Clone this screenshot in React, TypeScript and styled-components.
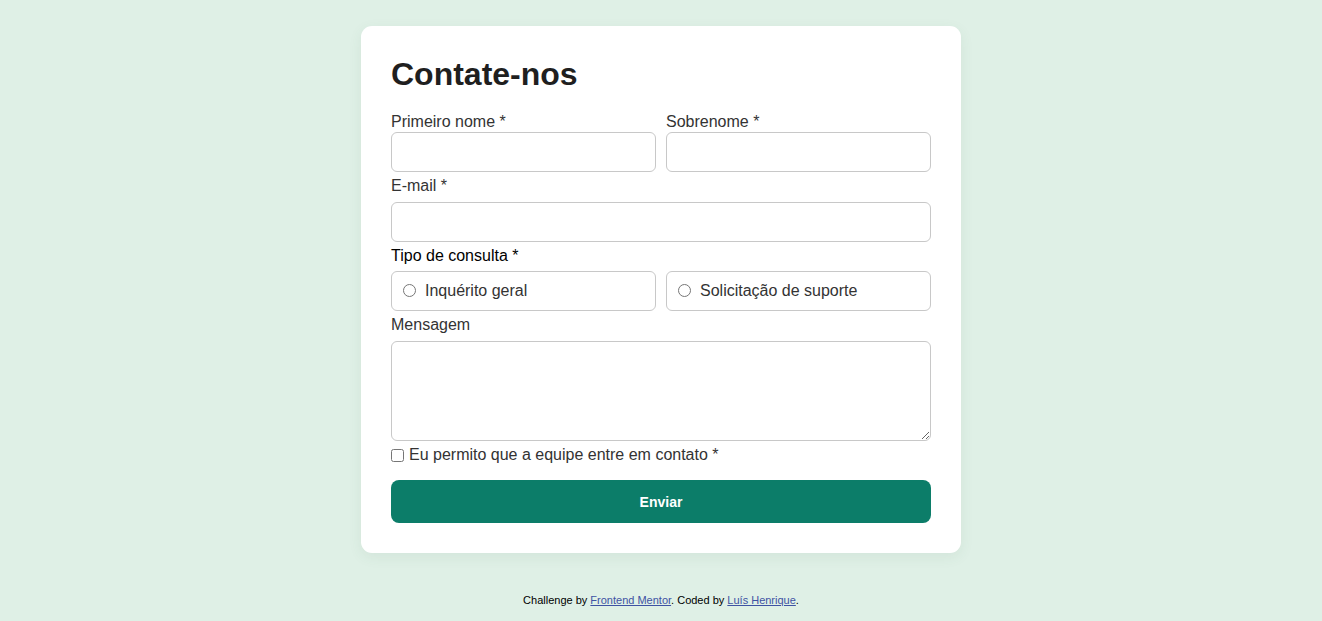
import * as React from 'react'
import styled, { createGlobalStyle } from 'styled-components'

const GlobalStyle = createGlobalStyle`
  body {
    margin: 0;
    background: #dff0e6;
    font-family: 'Liberation Sans', Arial, sans-serif;
  }
`

export default function App() {
  return (
    <React.Fragment>
      <GlobalStyle />
      <Page>
        <Card>
          <Title>Contate-nos</Title>
          <Form onSubmit={e => e.preventDefault()}>
            <Row>
              <Field>
                <Label htmlFor="first" tight>
                  Primeiro nome *
                </Label>
                <Input id="first" type="text" />
              </Field>
              <Field>
                <Label htmlFor="last" tight>
                  Sobrenome *
                </Label>
                <Input id="last" type="text" />
              </Field>
            </Row>
            <Field>
              <Label htmlFor="email">E-mail *</Label>
              <Input id="email" type="email" />
            </Field>
            <Fieldset>
              <Legend>Tipo de consulta *</Legend>
              <Row>
                <RadioBox>
                  <Radio type="radio" name="query" />
                  Inquérito geral
                </RadioBox>
                <RadioBox>
                  <Radio type="radio" name="query" />
                  Solicitação de suporte
                </RadioBox>
              </Row>
            </Fieldset>
            <Field>
              <Label htmlFor="msg">Mensagem</Label>
              <TextArea id="msg" />
            </Field>
            <Consent>
              <Check type="checkbox" />
              Eu permito que a equipe entre em contato *
            </Consent>
            <Submit type="submit">Enviar</Submit>
          </Form>
        </Card>
        <Footer>
          Challenge by <a href="#">Frontend Mentor</a>. Coded by{' '}
          <a href="#">Luís Henrique</a>.
        </Footer>
      </Page>
    </React.Fragment>
  )
}

const Page = styled.main`
  display: flex;
  flex-direction: column;
  align-items: center;
  padding-top: 26px;
`

const Card = styled.section`
  box-sizing: border-box;
  width: 600px;
  padding: 30px;
  background: #fff;
  border-radius: 11px;
  box-shadow: 0 4px 14px rgba(60, 100, 80, 0.08);
`

const Title = styled.h1`
  margin: 0 0 20px;
  font-size: 32px;
  font-weight: 700;
  color: #1f1f1f;
`

const Form = styled.form`
  display: flex;
  flex-direction: column;
`

const Row = styled.div`
  display: grid;
  grid-template-columns: 1fr 1fr;
  gap: 10px;
`

const Field = styled.div`
  display: flex;
  flex-direction: column;
  margin-bottom: 5px;
`

const Label = styled.label<{ tight?: boolean }>`
  font-size: 16px;
  color: #333;
  margin-bottom: ${p => (p.tight ? '0.5px' : '7.5px')};
`

const Input = styled.input`
  box-sizing: border-box;
  height: 40px;
  width: 100%;
  border: 1px solid #c8c8c8;
  border-radius: 6px;
  font: inherit;
  padding: 0 10px;
`

const Fieldset = styled.fieldset`
  border: 0;
  margin: 0 0 5px;
  padding: 0;
`

const Legend = styled.legend`
  padding: 0;
  font-size: 16px;
  color: #000;
  margin-bottom: 5.5px;
`

const RadioBox = styled.label`
  box-sizing: border-box;
  height: 40px;
  display: flex;
  align-items: center;
  gap: 6px;
  padding-left: 8px;
  border: 1px solid #c8c8c8;
  border-radius: 6px;
  font-size: 16px;
  color: #333;
`

const Radio = styled.input`
  margin: 0 3px;
  width: 13px;
  height: 13px;
`

const TextArea = styled.textarea`
  box-sizing: border-box;
  height: 100px;
  width: 100%;
  border: 1px solid #c8c8c8;
  border-radius: 6px;
  font: inherit;
  resize: vertical;
`

const Consent = styled.label`
  display: flex;
  align-items: center;
  gap: 5px;
  font-size: 16px;
  color: #333;
  margin-top: 0;
`

const Check = styled.input`
  margin: 0;
  width: 13px;
  height: 13px;
`

const Submit = styled.button`
  margin-top: 16px;
  height: 43px;
  border: 0;
  border-radius: 8px;
  background: #0c7d69;
  color: #fff;
  font-family: inherit;
  font-size: 14px;
  font-weight: 700;
  cursor: pointer;
`

const Footer = styled.footer`
  margin-top: 41px;
  font-size: 11px;
  color: #000;
  text-align: center;

  a {
    color: hsl(228, 45%, 44%);
  }
`
